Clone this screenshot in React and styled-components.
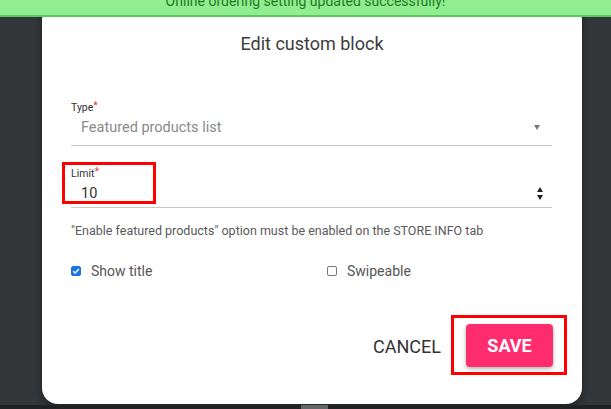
import React from 'react'
import styled, { createGlobalStyle } from 'styled-components'

const GlobalStyle = createGlobalStyle`
  html, body {
    margin: 0;
    padding: 0;
    background: #33373a;
    font-family: Roboto, "Liberation Sans", sans-serif;
    overflow: hidden;
  }
`

function App() {
  return (
    <Page>
      <GlobalStyle />
      <Toast>Online ordering setting updated successfully!</Toast>
      <Backdrop>
        <Modal>
          <Title>Edit custom block</Title>

          <Field $top={48}>
            <Label>Type<Req>*</Req></Label>
            <Control $bottom={4}>
              <Value $muted>Featured products list</Value>
              <SelectArrow />
            </Control>
          </Field>

          <Field $top={22}>
            <Highlight $top={-6} $left={-9} $width={94} $height={42} />
            <Label>Limit<Req>*</Req></Label>
            <Control>
              <Value>10</Value>
              <Spinner>
                <Tri $up />
                <Tri />
              </Spinner>
            </Control>
          </Field>

          <Hint>"Enable featured products" option must be enabled on the STORE INFO tab</Hint>

          <Checks>
            <Check>
              <Box $checked>
                <svg width="8" height="8" viewBox="0 0 10 10">
                  <path d="M1.5 5.2 L4 7.6 L8.6 2.4" fill="none" stroke="#fff" strokeWidth="1.8" />
                </svg>
              </Box>
              Show title
            </Check>
            <Check>
              <Box />
              Swipeable
            </Check>
          </Checks>

          <Actions>
            <CancelButton>Cancel</CancelButton>
            <SaveWrap>
              <Highlight $top={-9} $left={-15} $width={116} $height={60} />
              <SaveButton>Save</SaveButton>
            </SaveWrap>
          </Actions>
        </Modal>
      </Backdrop>
      <BottomBar>
        <Thumb />
      </BottomBar>
    </Page>
  )
}

const Page = styled.div`
  position: relative;
  width: 611px;
  height: 409px;
  display: flex;
  flex-direction: column;
`

const Toast = styled.div`
  position: absolute;
  top: 0;
  left: 0;
  right: 0;
  height: 14px;
  background: #90ee90;
  border-bottom: 2px solid #5cc85c;
  color: #1f7a1f;
  font-size: 14px;
  line-height: 0;
  text-align: center;
  z-index: 3;
  overflow: hidden;
  padding-top: 1px;
`

const Backdrop = styled.div`
  flex: 1;
  display: flex;
  padding: 4px 0 0 42px;
`

const Modal = styled.div`
  width: 540px;
  height: 400px;
  box-sizing: border-box;
  background: #fff;
  border-radius: 16px;
  box-shadow: 0 2px 8px rgba(0, 0, 0, 0.45);
  padding: 30px 29px 0 29px;
  display: flex;
  flex-direction: column;
`

const Title = styled.h2`
  margin: 0;
  font-size: 18px;
  font-weight: 400;
  color: #3c3c3c;
  text-align: center;
  line-height: 20px;
`

const Field = styled.div`
  position: relative;
  margin-top: ${p => p.$top}px;
  margin-right: 1px;
  border-bottom: 1px solid #c8c8c8;
`

const Label = styled.div`
  font-size: 10.5px;
  color: #333;
  line-height: 12px;
`

const Req = styled.span`
  color: #e53935;
  position: relative;
  top: -2px;
`

const Control = styled.div`
  display: flex;
  align-items: center;
  justify-content: space-between;
  height: 27px;
  padding: 0 9px ${p => p.$bottom || 0}px 10px;
`

const Value = styled.span`
  font-size: 14.5px;
  color: ${p => (p.$muted ? '#8a8a8a' : '#333')};
`

const SelectArrow = styled.span`
  width: 0;
  height: 0;
  border-left: 3.5px solid transparent;
  border-right: 3.5px solid transparent;
  border-top: 5px solid #777;
  margin-right: 3px;
`

const Spinner = styled.span`
  display: flex;
  flex-direction: column;
  gap: 3px;
`

const Tri = styled.span`
  width: 0;
  height: 0;
  border-left: 3.5px solid transparent;
  border-right: 3.5px solid transparent;
  ${p => (p.$up ? 'border-bottom: 5px solid #222;' : 'border-top: 5px solid #222;')}
`

const Highlight = styled.span`
  position: absolute;
  top: ${p => p.$top}px;
  left: ${p => p.$left}px;
  width: ${p => p.$width}px;
  height: ${p => p.$height}px;
  box-sizing: border-box;
  border: 3px solid #f00;
  pointer-events: none;
`

const Hint = styled.p`
  margin: 15px 0 0;
  font-size: 12.5px;
  color: #5a5a5a;
  line-height: 16px;
`

const Checks = styled.div`
  display: grid;
  grid-template-columns: 256px 1fr;
  margin-top: 24px;
`

const Check = styled.label`
  display: flex;
  align-items: center;
  gap: 10px;
  font-size: 14px;
  color: #555;
`

const Box = styled.span`
  width: 10px;
  height: 10px;
  box-sizing: border-box;
  border-radius: 2px;
  display: flex;
  align-items: center;
  justify-content: center;
  background: ${p => (p.$checked ? '#1a73e8' : '#fff')};
  border: 1px solid ${p => (p.$checked ? '#1a73e8' : '#777')};
`

const Actions = styled.div`
  display: flex;
  justify-content: flex-end;
  align-items: center;
  gap: 25px;
  margin-top: 47px;
`

const CancelButton = styled.button`
  background: none;
  border: none;
  padding: 0;
  font-family: inherit;
  font-size: 18px;
  text-transform: uppercase;
  color: #333;
`

const SaveWrap = styled.div`
  position: relative;
  margin-top: -2px;
`

const SaveButton = styled.button`
  display: block;
  width: 87px;
  height: 43px;
  border: none;
  border-radius: 4px;
  background: #ff2d6f;
  color: #fff;
  font-family: inherit;
  font-size: 18px;
  font-weight: 700;
  text-transform: uppercase;
  box-shadow: 0 2px 4px rgba(0, 0, 0, 0.3);
`

const BottomBar = styled.div`
  height: 4px;
  margin-top: 1px;
  background: #1f2123;
  display: flex;
  padding-left: 301px;
`

const Thumb = styled.span`
  width: 27px;
  background: #626769;
`

export default App
